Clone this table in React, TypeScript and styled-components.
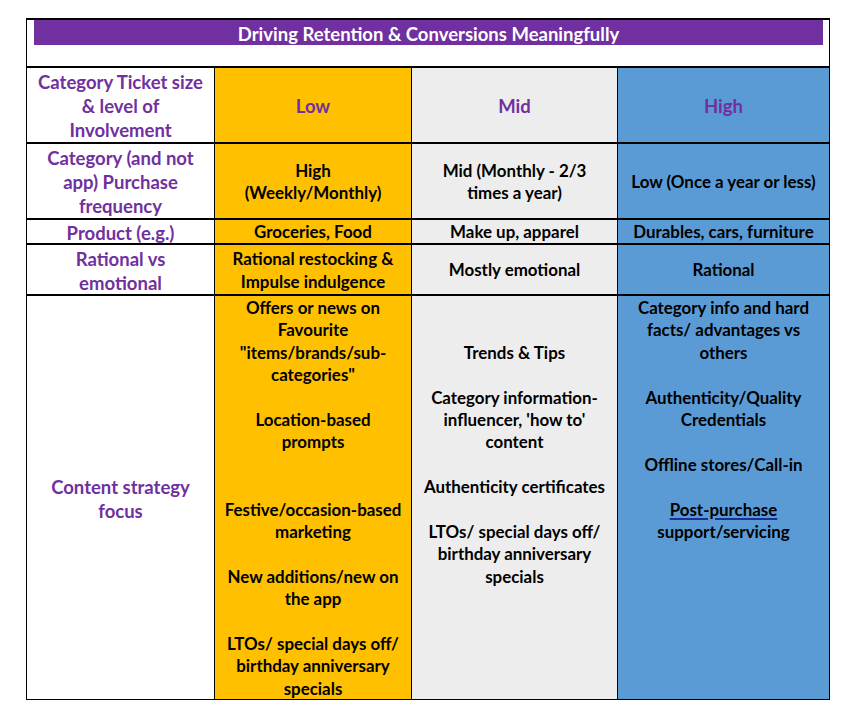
import React from 'react';
import styled, { createGlobalStyle } from 'styled-components';

const Global = createGlobalStyle`
  html, body { margin: 0; padding: 0; background: #ffffff; }
  body { font-family: Lato, "Liberation Sans", sans-serif; }
`;

const PURPLE = '#7030A0';
const YELLOW = '#FFC000';
const GREY = '#EDEDED';
const BLUE = '#5B9BD5';

const Page = styled.div`
  width: 860px;
  height: 716px;
  box-sizing: border-box;
  padding: 18px 0 0 26px;
`;

const Table = styled.div`
  display: grid;
  width: 804px;
  box-sizing: border-box;
  grid-template-columns: 187px 196px 205px 211px;
  grid-template-rows: 46px 74px 74px 23px 49px 403px;
  column-gap: 1px;
  row-gap: 2px;
  background: #000;
  border: 1px solid #000;
  border-top-width: 2px;
`;

const TitleRow = styled.div`
  grid-column: 1 / -1;
  background: #fff;
  padding: 0 6px 0 7px;
`;

const TitleBar = styled.div`
  height: 25px;
  box-sizing: border-box;
  padding-top: 2px;
  background: ${PURPLE};
  color: #fff;
  font-weight: 700;
  font-size: 18.5px;
  display: flex;
  align-items: center;
  justify-content: center;
  white-space: nowrap;
`;

const Cell = styled.div<{ $bg: string; $top?: boolean }>`
  background: ${(p) => p.$bg};
  box-sizing: border-box;
  padding-top: ${(p) => (p.$top ? 1 : 2)}px;
  display: flex;
  flex-direction: column;
  align-items: center;
  justify-content: ${(p) => (p.$top ? 'flex-start' : 'center')};
  text-align: center;
  font-weight: 700;
  color: #000;
  font-size: 16.9px;
  line-height: 22.4px;
  white-space: nowrap;
  overflow: hidden;
`;

const LabelCell = styled(Cell)`
  color: ${PURPLE};
  font-size: 18.5px;
  line-height: 24px;
`;

const Para = styled.div<{ $gap?: number }>`
  margin-top: ${(p) => (p.$gap ?? 0) * 22.4}px;
`;

const Linked = styled.span`
  text-decoration: underline;
  text-decoration-color: #1a2f9c;
  text-decoration-thickness: 2px;
  text-underline-offset: 2px;
`;

const Lines: React.FC<{ lines: React.ReactNode[] }> = ({ lines }) => (
  <>
    {lines.map((l, i) => (
      <React.Fragment key={i}>
        {i > 0 && <br />}
        {l}
      </React.Fragment>
    ))}
  </>
);

type Block = { gap: number; lines: React.ReactNode[] };

const Blocks: React.FC<{ blocks: Block[] }> = ({ blocks }) => (
  <>
    {blocks.map((b, i) => (
      <Para key={i} $gap={b.gap}>
        <Lines lines={b.lines} />
      </Para>
    ))}
  </>
);

const lowBlocks: Block[] = [
  { gap: 0, lines: ['Offers or news on', 'Favourite', '"items/brands/sub-', 'categories"'] },
  { gap: 1, lines: ['Location-based', 'prompts'] },
  { gap: 2, lines: ['Festive/occasion-based', 'marketing'] },
  { gap: 1, lines: ['New additions/new on', 'the app'] },
  { gap: 1, lines: ['LTOs/ special days off/', 'birthday anniversary', 'specials'] },
];

const midBlocks: Block[] = [
  { gap: 2, lines: ['Trends & Tips'] },
  { gap: 1, lines: ['Category information-', "influencer, 'how to'", 'content'] },
  { gap: 1, lines: ['Authenticity certificates'] },
  { gap: 1, lines: ['LTOs/ special days off/', 'birthday anniversary', 'specials'] },
];

const highBlocks: Block[] = [
  { gap: 0, lines: ['Category info and hard', 'facts/ advantages vs', 'others'] },
  { gap: 1, lines: ['Authenticity/Quality', 'Credentials'] },
  { gap: 1, lines: ['Offline stores/Call-in'] },
  { gap: 1, lines: [<Linked key="pp">Post-purchase</Linked>, 'support/servicing'] },
];

export default function App() {
  return (
    <>
      <Global />
      <Page>
        <Table>
          <TitleRow>
            <TitleBar>Driving Retention &amp; Conversions Meaningfully</TitleBar>
          </TitleRow>

          <LabelCell $bg="#fff">
            <Lines lines={['Category Ticket size', '& level of', 'Involvement']} />
          </LabelCell>
          <LabelCell $bg={YELLOW}>Low</LabelCell>
          <LabelCell $bg={GREY}>Mid</LabelCell>
          <LabelCell $bg={BLUE}>High</LabelCell>

          <LabelCell $bg="#fff">
            <Lines lines={['Category (and not', 'app) Purchase', 'frequency']} />
          </LabelCell>
          <Cell $bg={YELLOW}>
            <Lines lines={['High', '(Weekly/Monthly)']} />
          </Cell>
          <Cell $bg={GREY}>
            <Lines lines={['Mid (Monthly - 2/3', 'times a year)']} />
          </Cell>
          <Cell $bg={BLUE}>Low (Once a year or less)</Cell>

          <LabelCell $bg="#fff">Product (e.g.)</LabelCell>
          <Cell $bg={YELLOW}>Groceries, Food</Cell>
          <Cell $bg={GREY}>Make up, apparel</Cell>
          <Cell $bg={BLUE}>Durables, cars, furniture</Cell>

          <LabelCell $bg="#fff">
            <Lines lines={['Rational vs', 'emotional']} />
          </LabelCell>
          <Cell $bg={YELLOW}>
            <Lines lines={['Rational restocking &', 'Impulse indulgence']} />
          </Cell>
          <Cell $bg={GREY}>Mostly emotional</Cell>
          <Cell $bg={BLUE}>Rational</Cell>

          <LabelCell $bg="#fff">
            <Lines lines={['Content strategy', 'focus']} />
          </LabelCell>
          <Cell $bg={YELLOW} $top>
            <Blocks blocks={lowBlocks} />
          </Cell>
          <Cell $bg={GREY} $top>
            <Blocks blocks={midBlocks} />
          </Cell>
          <Cell $bg={BLUE} $top>
            <Blocks blocks={highBlocks} />
          </Cell>
        </Table>
      </Page>
    </>
  );
}
